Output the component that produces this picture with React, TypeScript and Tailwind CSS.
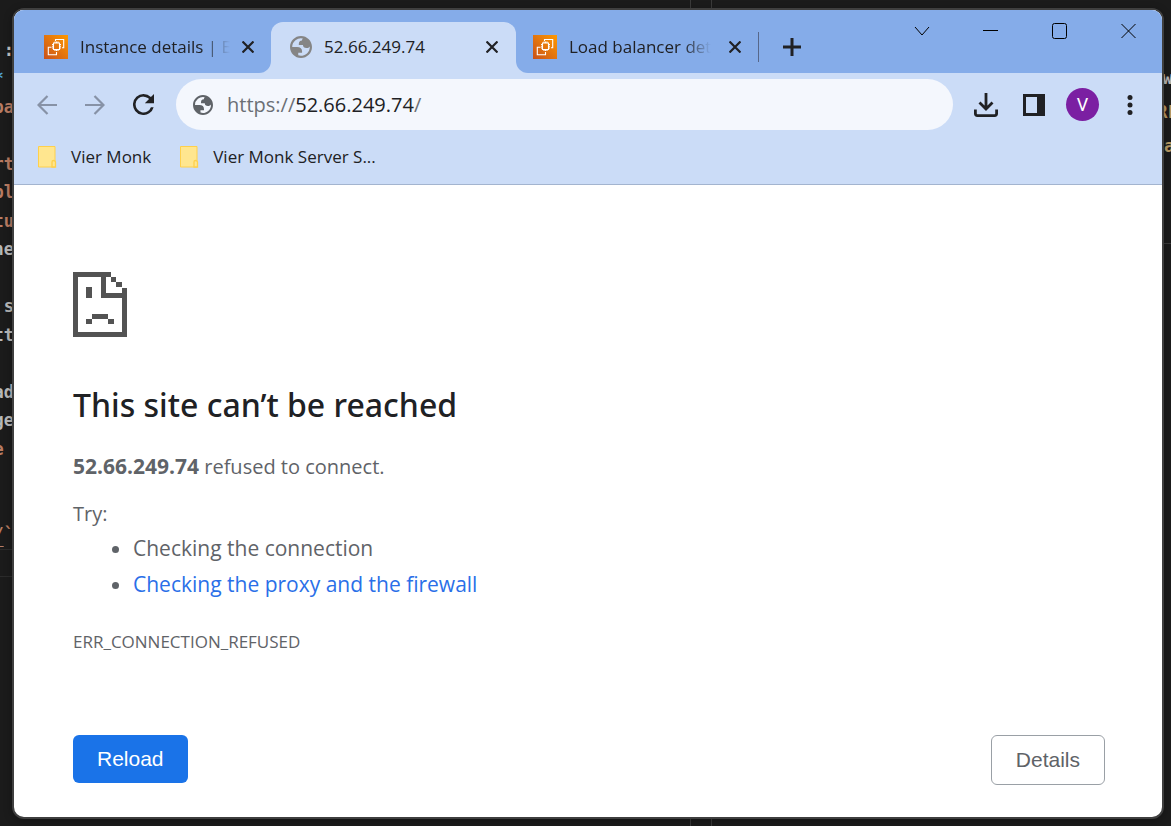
import React from "react";

type CodeLine = { text: React.ReactNode; tone?: string };

const leftCode: CodeLine[] = [
  { text: " :", tone: "text-[#c4c4c4]" },
  { text: "* ", tone: "text-[#4fa3d9]" },
  { text: "pa" },
  { text: "" },
  { text: "rt" },
  { text: "pl" },
  { text: "tu" },
  { text: "ne", tone: "text-[#b8b8b8]" },
  { text: "" },
  { text: " s", tone: "text-[#b8b8b8]" },
  { text: "tt", tone: "text-[#b8b8b8]" },
  { text: "" },
  { text: "ad", tone: "text-[#b8b8b8]" },
  { text: "ge", tone: "text-[#b8b8b8]" },
  { text: "e " },
  { text: "" },
  { text: "" },
  {
    text: (
      <>
        <span className="underline underline-offset-[6px]">/</span>`
      </>
    ),
  },
];

const sans = "font-['Open_Sans','Noto_Sans',sans-serif]";

function Ec2Icon() {
  return (
    <svg viewBox="0 0 24 24" className="size-6 shrink-0" fill="none" aria-hidden="true">
      <defs>
        <linearGradient id="ec2" x1="0" y1="24" x2="24" y2="0" gradientUnits="userSpaceOnUse">
          <stop stopColor="#c8511b" />
          <stop offset="1" stopColor="#f90" />
        </linearGradient>
      </defs>
      <path fill="url(#ec2)" d="M0 0h24v24H0z" />
      <g stroke="#fff" strokeWidth="1.1">
        <path d="M9.5 8h6v6.500h-6zM11 8V6.500M12.500 8V6.500M14 8V6.500M11 16v-1.500M12.500 16v-1.500M14 16v-1.500M8 9.500h1.500M8 11.200h1.500M8 13h1.500M15.500 9.500H17M15.500 11.200H17M15.500 13H17" />
        <path d="M11.500 6V4.500h8.200v8.200H18M7.500 12.200H4.300v7.500h8.200V17" />
      </g>
    </svg>
  );
}

function Globe({ className }: { className: string }) {
  return (
    <svg viewBox="2 2 20 20" className={className} fill="currentColor" aria-hidden="true">
      <path
        fillRule="evenodd"
        d="M12 2C6.480 2 2 6.480 2 12s4.480 10 10 10 10-4.480 10-10S17.520 2 12 2zM4 12h4.400c3.407.022 4.922 1.730 4.543 5.127H9.488v2.470a8.004 8.004 0 0 0 10.498-8.083C19.327 12.504 18.332 13 17 13c-2.137 0-3.206-.916-3.206-2.750h-3.748c-.274-2.728.683-4.092 2.870-4.092 0-.975.327-1.597.811-1.970A8.004 8.004 0 0 0 4 12z"
      />
    </svg>
  );
}

function CloseButton({ label }: { label: string }) {
  return (
    <button aria-label={label} className="flex size-5 shrink-0 items-center justify-center text-[#202124]">
      <svg viewBox="0 0 12 12" className="size-3" stroke="currentColor" strokeWidth="2.200" aria-hidden="true">
        <path d="M.5.5l11 11M11.500.5l-11 11" />
      </svg>
    </button>
  );
}

function FadedTitle({ children }: { children: string }) {
  return (
    <span className="min-w-0 flex-1 overflow-hidden whitespace-nowrap [mask-image:linear-gradient(to_right,black_80%,transparent)]">
      {children}
    </span>
  );
}

function TabStrip() {
  return (
    <div className="flex h-[63px] bg-[#cbdcf7]">
      <div className="flex flex-1 bg-[#85ace9]">
        <div className="flex bg-[#cbdcf7]">
          <div className="flex w-[257px] items-center rounded-br-xl bg-[#85ace9] pt-[11px] pr-[13px] pl-[30px]">
            <Ec2Icon />
            <span className="w-3 shrink-0" />
            <FadedTitle>Instance details | EC2</FadedTitle>
            <span className="w-2 shrink-0" />
            <CloseButton label="Close Instance details" />
          </div>
        </div>
        <div className="flex bg-[#85ace9] pt-3">
          <div className="flex w-[245px] items-center rounded-t-xl bg-[#cbdcf7] pr-[14px] pb-0.5 pl-[19px]">
            <Globe className="size-[22px] shrink-0 text-[#858585]" />
            <span className="ml-3 flex-1">52.66.249.74</span>
            <CloseButton label="Close 52.66.249.74" />
          </div>
        </div>
        <div className="flex flex-1 bg-[#cbdcf7]">
          <div className="flex flex-1 items-center rounded-bl-xl bg-[#85ace9] pt-[11px] pl-[17px]">
            <div className="flex w-[212px] items-center">
              <Ec2Icon />
              <span className="w-3 shrink-0" />
              <FadedTitle>Load balancer details</FadedTitle>
              <span className="w-[14px] shrink-0" />
              <CloseButton label="Close Load balancer details" />
            </div>
            <span className="ml-[13px] h-[30px] w-px bg-[#56678a]" />
            <button aria-label="New tab" className="ml-6 text-[#202124]">
              <svg viewBox="0 0 18 18" className="size-[18px]" stroke="currentColor" strokeWidth="3" aria-hidden="true">
                <path d="M9 0v18M0 9h18" />
              </svg>
            </button>
          </div>
        </div>
      </div>
      <div className="flex bg-[#85ace9] pt-[13px] text-black">
        <div className="flex h-4 items-center gap-[53px] pr-[25px]">
          <button aria-label="Search tabs">
            <svg viewBox="0 0 16 16" className="size-4" fill="none" stroke="currentColor" aria-hidden="true">
              <path d="M1 4l7 8 7-8" />
            </svg>
          </button>
          <button aria-label="Minimize">
            <svg viewBox="0 0 16 16" className="size-4" stroke="currentColor" aria-hidden="true">
              <path d="M0 7.500h15" />
            </svg>
          </button>
          <button aria-label="Maximize">
            <svg viewBox="0 0 16 16" className="size-4" fill="none" stroke="currentColor" aria-hidden="true">
              <rect x=".5" y=".5" width="14" height="15" rx="2" />
            </svg>
          </button>
          <button aria-label="Close window">
            <svg viewBox="0 0 16 16" className="size-4" stroke="currentColor" aria-hidden="true">
              <path d="M.5 1l14 14M14.500 1l-14 14" />
            </svg>
          </button>
        </div>
      </div>
    </div>
  );
}

function Toolbar() {
  return (
    <div className="flex h-[63px] items-center pr-[21px] pl-[23px] text-[#202124]">
      <div className="flex items-center gap-7 text-[#8792a6]">
        <button aria-label="Back">
          <svg viewBox="0 0 20 20" className="size-5" fill="none" stroke="currentColor" strokeWidth="2.200" aria-hidden="true">
            <path d="M20 10H2M10.500 1L1.500 10l9 9" />
          </svg>
        </button>
        <button aria-label="Forward">
          <svg viewBox="0 0 20 20" className="size-5" fill="none" stroke="currentColor" strokeWidth="2.200" aria-hidden="true">
            <path d="M0 10h18M9.500 1l9 9-9 9" />
          </svg>
        </button>
        <button aria-label="Reload page" className="text-[#202124]">
          <svg viewBox="4 4 16 16" className="size-[21px]" fill="currentColor" aria-hidden="true">
            <path d="M17.650 6.350A7.958 7.958 0 0 0 12 4a8 8 0 1 0 7.730 10h-2.080A6 6 0 1 1 12 6c1.660 0 3.140.69 4.220 1.780L13 11h7V4z" />
          </svg>
        </button>
      </div>
      <label className="ml-[22px] flex h-[51px] flex-1 items-center rounded-full bg-[#f4f7fd] pl-[17px]">
        <Globe className="size-5 shrink-0 text-[#5f6368]" />
        <span className="ml-[14px] text-xl text-[#6b6f75]">
          https://<span className="text-[#202124]">52.66.249.74</span>/
        </span>
        <input aria-label="Address" className="min-w-0 flex-1 bg-transparent outline-none" />
      </label>
      <button aria-label="Downloads" className="ml-[21px]">
        <svg viewBox="0 0 24 24" className="size-6" fill="none" stroke="currentColor" strokeWidth="2.800" aria-hidden="true">
          <path d="M12 0v15M5.500 9.500l6.500 6.500 6.500-6.500" />
          <path d="M1.400 16.500v4.100q0 2 2 2h17.200q2 0 2-2v-4.100" />
        </svg>
      </button>
      <button aria-label="Side panel" className="ml-[25px]">
        <svg viewBox="0 0 22 22" className="size-[22px]" aria-hidden="true">
          <path fill="currentColor" fillRule="evenodd" d="M0 0h22v22H0zM3 3v16h11V3z" />
        </svg>
      </button>
      <button aria-label="Profile" className="ml-[21px] size-[33px] rounded-full bg-[#7b1fa2] font-['Roboto',sans-serif] text-lg text-white">
        V
      </button>
      <button aria-label="Menu" className="ml-5">
        <svg viewBox="0 0 22 20" className="h-5 w-[22px]" fill="currentColor" aria-hidden="true">
          <circle cx="11" cy="2.500" r="2.500" />
          <circle cx="11" cy="10" r="2.500" />
          <circle cx="11" cy="17.500" r="2.500" />
        </svg>
      </button>
    </div>
  );
}

function Bookmark({ children }: { children: string }) {
  return (
    <a href="#bookmark" className="flex items-center gap-[14px]">
      <svg viewBox="0 0 20 22" className="h-[22px] w-5" fill="#ffe68f" stroke="#ffd04b" aria-hidden="true">
        <path d="M1.500.5H18V21H1.500z" />
        <path strokeWidth="1.300" d="M15 21v-5q0-1.500 1.500-1.500t2 1.500v5z" />
      </svg>
      {children}
    </a>
  );
}

export default function App() {
  return (
    <div className={`relative flex min-h-screen overflow-hidden bg-[#1b1b1b] text-[17px] ${sans}`}>
      <pre className="-mr-0.5 w-[14px] shrink-0 pt-9 font-['DejaVu_Sans_Mono',monospace] text-[17px] font-bold text-[#b97b62]">
        {leftCode.map((line, i) => (
          <div key={i} className={`flex justify-end leading-7 odd:h-7 even:h-[29px] ${line.tone ?? ""}`}>
            {line.text}
          </div>
        ))}
        <div className="h-7 border-y border-[#2b2b2b]" />
      </pre>
      <div className="flex min-w-0 flex-1 flex-col">
        <div className="flex h-2 justify-center">
          <div className="ml-[226px] w-[22px] border-x border-[#3a3a3a]" />
        </div>
        <main className="relative flex flex-1 flex-col overflow-hidden rounded-xl border-2 border-[#3f3f3f] bg-white shadow-[0_2px_8px_rgba(0,0,0,0.3)]">
          <header className="border-b border-[#a3b4cf] bg-[#cbdcf7] text-[#202124]">
            <TabStrip />
            <Toolbar />
            <nav className="flex h-12 items-start gap-7 pt-2 pl-[23px]">
              <Bookmark>Vier Monk</Bookmark>
              <Bookmark>Vier Monk Server S...</Bookmark>
            </nav>
          </header>
          <section className="flex flex-1 flex-col pt-[87px] pr-[57px] pb-8 pl-[59px] text-[#5f6368]">
            <svg viewBox="0 0 54 65" className="h-[65px] w-[54px]" fill="#535353" shapeRendering="crispEdges" aria-hidden="true">
              <path d="M0 0h38v5H33v16h16v-5h5v49H0zM5 5v55h44V26H28V5zM38 5h5v5h-5zM43 10h6v5h-6zM13 15h6v11h-6zM19 42h16v5H19zM13 47h6v5h-6zM35 47h6v5h-6z" fillRule="evenodd" />
            </svg>
            <h1 className="mt-11 font-['Noto_Sans',sans-serif] text-[32px] leading-[48px] font-medium text-[#202124]">This site can’t be reached</h1>
            <p className="mt-[21px] text-xl leading-8">
              <strong className="text-[21px]">52.66.249.74</strong> refused to connect.
            </p>
            <p className="mt-[15px] text-xl leading-8">Try:</p>
            <ul className="list-disc pl-[60px] text-[21px] leading-9">
              <li>Checking the connection</li>
              <li>
                <a href="#buttons" className="text-[#2a6fe8]">Checking the proxy and the firewall</a>
              </li>
            </ul>
            <p className="mt-[26px] text-[17px] leading-7">ERR_CONNECTION_REFUSED</p>
            <div className="mt-auto flex items-start justify-between font-['Liberation_Sans',sans-serif] text-[21px]">
              <button className="h-12 rounded-md bg-[#1a73e8] px-6 text-white">Reload</button>
              <button className="h-[50px] rounded-md border border-[#9aa0a6] px-6">Details</button>
            </div>
          </section>
        </main>
        <div className="flex h-[7px] justify-center">
          <div className="ml-[226px] w-[22px] border-x border-[#3a3a3a]" />
        </div>
      </div>
      <pre className="w-[7px] shrink-0 overflow-hidden pt-[61px] font-['DejaVu_Sans_Mono',monospace] text-[17px] leading-[34px] font-bold text-[#b89a64]">
        <div className="flex justify-center text-[#b8b8b8]">w</div>
        <div className="flex justify-center">RL</div>
        <div>at</div>
        <div className="mt-20 border-t border-[#3a3a3a]" />
      </pre>
    </div>
  );
}
